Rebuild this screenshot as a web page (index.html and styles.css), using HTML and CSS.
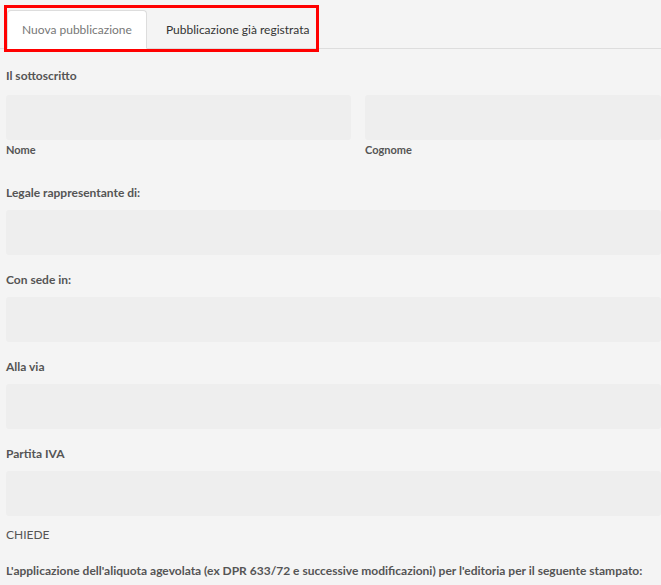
FILE: index.html
```html
<!DOCTYPE html>
<html lang="it">
<head>
<meta charset="utf-8">
<title>Richiesta aliquota agevolata</title>
<link rel="stylesheet" href="styles.css">
</head>
<body>
<div class="page">
  <div class="tabs-wrap">
    <ul class="nav-tabs">
      <li class="tab active"><a href="#">Nuova pubblicazione</a></li>
      <li class="tab"><a href="#">Pubblicazione già registrata</a></li>
    </ul>
    <div class="highlight"></div>
  </div>

  <form class="form">
    <div class="group group-names">
      <label class="label label-first">Il sottoscritto</label>
      <div class="row">
        <div class="col">
          <div class="input"></div>
          <span class="help">Nome</span>
        </div>
        <div class="col">
          <div class="input"></div>
          <span class="help">Cognome</span>
        </div>
      </div>
    </div>

    <div class="group">
      <label class="label">Legale rappresentante di:</label>
      <div class="input"></div>
    </div>

    <div class="group">
      <label class="label">Con sede in:</label>
      <div class="input"></div>
    </div>

    <div class="group">
      <label class="label">Alla via</label>
      <div class="input"></div>
    </div>

    <div class="group group-last">
      <label class="label">Partita IVA</label>
      <div class="input"></div>
    </div>

    <p class="chiede">CHIEDE</p>
    <p class="label">L'applicazione dell'aliquota agevolata (ex DPR 633/72 e successive modificazioni) per l'editoria per il seguente stampato:</p>
  </form>
</div>
</body>
</html>
```

FILE: styles.css
```css
html, body {
  margin: 0;
  padding: 0;
  background: #f4f4f4;
}

body {
  font-family: Lato, "Open Sans", sans-serif;
  font-size: 12px;
  color: #555;
  overflow: hidden;
}

.page {
  width: 661px;
}

.tabs-wrap {
  position: relative;
}

.nav-tabs {
  list-style: none;
  margin: 0;
  padding: 10px 0 0 7px;
  display: flex;
  border-bottom: 1px solid #ddd;
}

.tab {
  margin-bottom: -1px;
}

.tab a {
  display: block;
  margin-right: 4px;
  padding: 10px 14px;
  line-height: 17px;
  border: 1px solid transparent;
  border-radius: 4px 4px 0 0;
  color: #333;
  text-decoration: none;
}

.tab.active a {
  background: #fff;
  border-color: #ddd #ddd transparent;
  color: #777;
}

.highlight {
  position: absolute;
  left: 4px;
  top: 5px;
  width: 315px;
  height: 47px;
  box-sizing: border-box;
  border: 3px solid #ff0000;
  pointer-events: none;
}

.form {
  padding: 18px 0 0 6px;
  margin: 0;
}

.label {
  display: block;
  margin: 0 0 9px;
  line-height: 17px;
  font-weight: 700;
  color: #555;
}

.label-first {
  margin-bottom: 11px;
}

.group {
  margin-bottom: 16px;
}

.group-names {
  margin-bottom: 27px;
}

.group-last {
  margin-bottom: 10px;
}

.row {
  display: grid;
  grid-template-columns: 345px 1fr;
  column-gap: 14px;
}

.input {
  height: 45px;
  background: #eeeeee;
  border-radius: 3px;
}

.help {
  display: block;
  margin-top: 3px;
  font-size: 11px;
  line-height: 14px;
  font-weight: 700;
  color: #555;
}

.chiede {
  margin: 0 0 19px;
  line-height: 17px;
  color: #555;
}
```
